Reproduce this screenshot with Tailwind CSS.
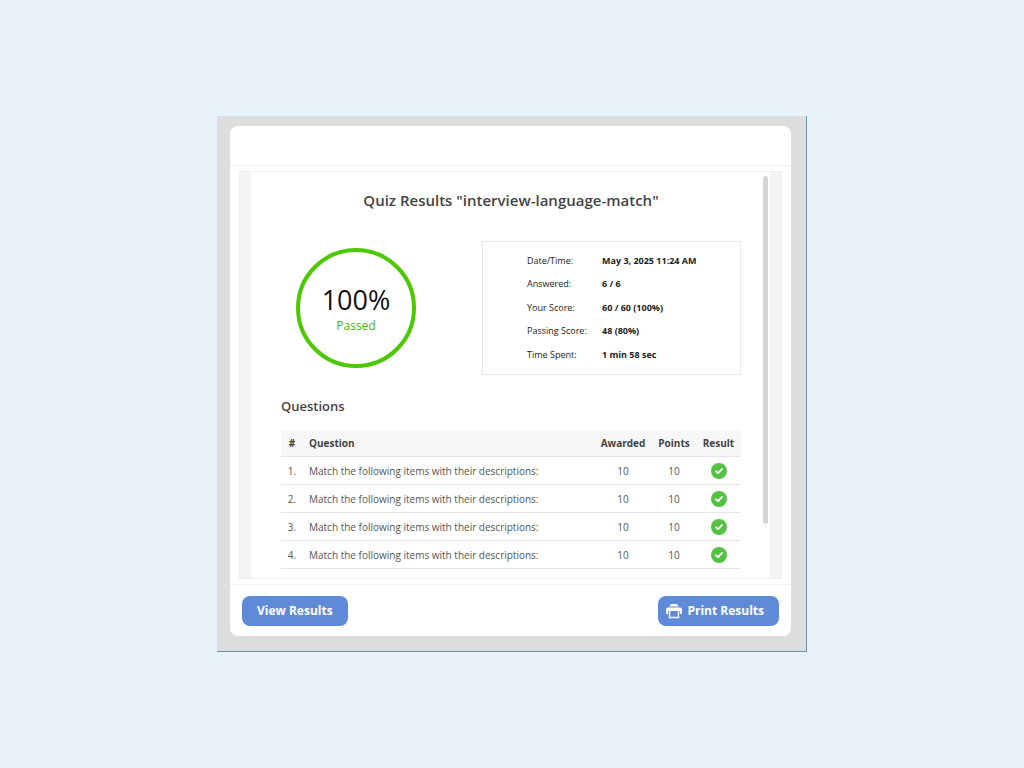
<!DOCTYPE html>
<html lang="en">
<head>
<meta charset="utf-8">
<meta name="viewport" content="width=device-width, initial-scale=1">
<title>Quiz Results</title>
<script src="https://cdn.jsdelivr.net/npm/@tailwindcss/browser@4"></script>
</head>
<body class="min-h-screen flex items-center justify-center bg-[#e7f3f9] font-['Open_Sans','Noto_Sans',sans-serif] text-[#444]">
<svg class="hidden" aria-hidden="true">
  <symbol id="check" viewBox="0 0 16 16">
    <circle cx="8" cy="8" r="8" fill="#55c243"/>
    <path d="M5 8.300 7 10.200 11 6" fill="none" stroke="#fff" stroke-width="1.800" stroke-linecap="round" stroke-linejoin="round"/>
  </symbol>
</svg>
<div class="w-full max-w-[590px] bg-[#dbdddf] border-r border-b border-[#6b92ae] pt-[10px] pl-[13px] pr-[15px] pb-[15px]">
  <div class="bg-white rounded-lg">
    <header class="h-10 border-b border-[#f0f0f0]"></header>
    <main class="mt-[5px] mb-[5px] mx-[9px] border border-[#eee] bg-[#f4f4f4] px-[11px]">
      <div class="relative bg-white pl-[30px] pr-[29px] pt-4 pb-[9px]">
        <div class="absolute right-[2px] top-1 w-[5px] h-[348px] rounded-full bg-[#d5d5d5]"></div>
        <h1 class="text-center text-[15px] leading-6 font-semibold text-[#444]">Quiz Results "interview-language-match"</h1>
        <section class="mt-[29px] flex items-center justify-between">
          <div class="ml-[15px] size-[120px] rounded-full border-4 border-[#4bc800] flex flex-col items-center justify-center pt-1">
            <div class="text-[27px] leading-8 text-[#111]">100%</div>
            <div class="text-xs leading-5 text-[#3fb618]">Passed</div>
          </div>
          <dl class="w-[259px] h-[134px] border border-[#e8e8e8] pl-11 py-[7px] grid grid-cols-[75px_1fr] grid-rows-5 items-center text-[9px] leading-4 text-[#222]">
            <dt>Date/Time:</dt><dd class="font-bold">May 3, 2025 11:24 AM</dd>
            <dt>Answered:</dt><dd class="font-bold">6 / 6</dd>
            <dt>Your Score:</dt><dd class="font-bold">60 / 60 (100%)</dd>
            <dt>Passing Score:</dt><dd class="font-bold">48 (80%)</dd>
            <dt>Time Spent:</dt><dd class="font-bold">1 min 58 sec</dd>
          </dl>
        </section>
        <h2 class="mt-[21px] text-[13px] leading-5 font-semibold text-[#444]">Questions</h2>
        <table class="mt-[14px] w-full table-fixed text-[10px] leading-4 text-[#555]">
          <colgroup><col class="w-[22px]"><col><col class="w-[58px]"><col class="w-[44px]"><col class="w-[45px]"></colgroup>
          <thead>
            <tr class="h-[27px] bg-[#f7f7f7] border-b border-[#e6e6e6] text-[#444]"><th class="font-bold">#</th><th class="font-bold text-left pl-[6px]">Question</th><th class="font-bold">Awarded</th><th class="font-bold">Points</th><th class="font-bold">Result</th></tr>
          </thead>
          <tbody class="text-center">
            <tr class="h-7 border-b border-[#e6e6e6]"><td>1.</td><td class="text-left pl-[6px]">Match the following items with their descriptions:</td><td>10</td><td>10</td><td><svg class="size-4 mx-auto" role="img" aria-label="Correct"><use href="#check"/></svg></td></tr>
            <tr class="h-7 border-b border-[#e6e6e6]"><td>2.</td><td class="text-left pl-[6px]">Match the following items with their descriptions:</td><td>10</td><td>10</td><td><svg class="size-4 mx-auto" role="img" aria-label="Correct"><use href="#check"/></svg></td></tr>
            <tr class="h-7 border-b border-[#e6e6e6]"><td>3.</td><td class="text-left pl-[6px]">Match the following items with their descriptions:</td><td>10</td><td>10</td><td><svg class="size-4 mx-auto" role="img" aria-label="Correct"><use href="#check"/></svg></td></tr>
            <tr class="h-7 border-b border-[#e6e6e6]"><td>4.</td><td class="text-left pl-[6px]">Match the following items with their descriptions:</td><td>10</td><td>10</td><td><svg class="size-4 mx-auto" role="img" aria-label="Correct"><use href="#check"/></svg></td></tr>
          </tbody>
        </table>
      </div>
    </main>
    <footer class="border-t border-[#f0f0f0] flex justify-between px-3 pt-[11px] pb-[10px]">
      <button type="button" class="h-[30px] px-[15px] rounded-lg bg-[#5f8ad8] text-white text-xs font-bold">View Results</button>
      <button type="button" class="h-[30px] pl-2 pr-[15px] rounded-lg bg-[#5f8ad8] text-white text-xs font-bold flex items-center gap-[5px]">
        <svg class="size-4" viewBox="0 0 16 16" fill="none" aria-hidden="true">
          <path d="M5 1h6l1.500 2.500h-9Z" fill="#fff"/>
          <path d="M2 4.500h12a2 2 0 0 1 2 2V10a1 1 0 0 1-1 1h-1V8H2v3H1a1 1 0 0 1-1-1V6.500a2 2 0 0 1 2-2Z" fill="#fff"/>
          <path d="M3.500 8v6.500h9V8" stroke="#fff" stroke-width="1.400"/>
        </svg>
        Print Results</button>
    </footer>
  </div>
</div>
</body>
</html>
